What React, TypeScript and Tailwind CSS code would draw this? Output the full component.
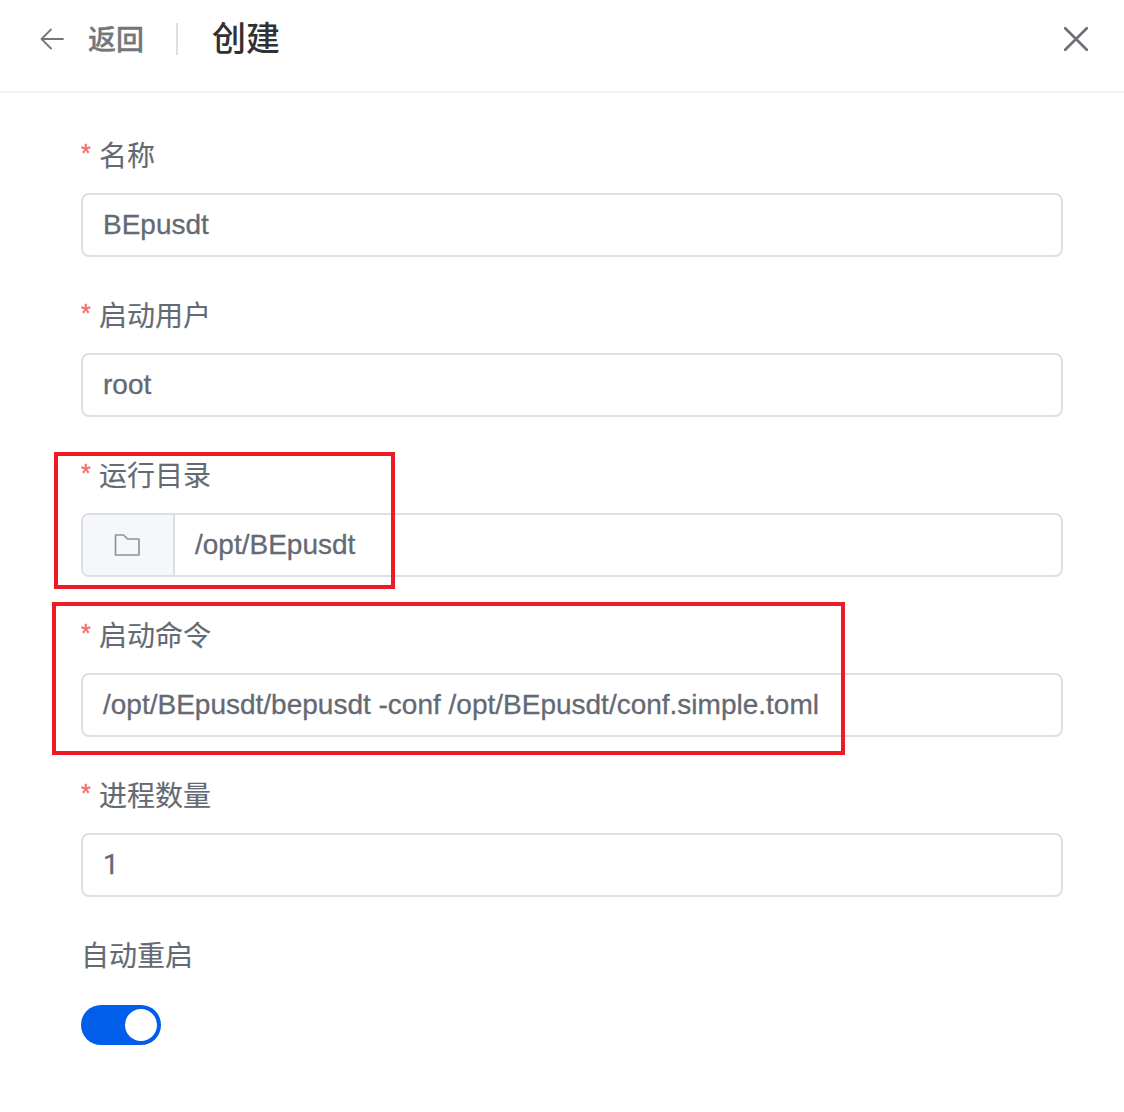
import type { ReactNode } from "react";

const box = "flex h-16 overflow-hidden rounded-[8px] border-2 border-[#dcdfe6] bg-white";

function Field({ label, required = true, children }: { label: string; required?: boolean; children: ReactNode }) {
  return (
    <div className="flex h-40 flex-col gap-4">
      <div className="flex h-[44px] pt-[2px] text-[28px] leading-[44px] [-webkit-text-stroke:0.15px]">
        {required && (
          <span className="-mt-1 mr-2 w-[10px] text-[25px] text-[#f56c6c] [-webkit-text-stroke:0.4px_#f56c6c]">*</span>
        )}
        <span>{label}</span>
      </div>
      {children}
    </div>
  );
}

function Input({ value, className = "" }: { value: string; className?: string }) {
  return (
    <div className={box}>
      <span className={`px-5 pt-px text-[28px] leading-[58px] whitespace-pre ${className}`}>{value}</span>
    </div>
  );
}

export default function App() {
  return (
    <div className="relative h-[1112px] w-[1124px] overflow-hidden bg-white font-['Liberation_Sans','Noto_Sans_CJK_SC',sans-serif] text-[#646a73] [-webkit-text-stroke:0.3px]">
      <header className="flex h-[93px] items-start border-b-2 border-[#f0f0f0] pl-10">
        <svg className="mt-[27px] h-6 w-6" viewBox="0 0 24 24" fill="none" stroke="#73767a" strokeWidth="1.8" strokeLinecap="round" strokeLinejoin="round">
          <path d="M23 12H2M11 2.5 1.5 12 11 21.5" />
        </svg>
        <span className="mt-[2px] ml-6 text-[28px] leading-[78px] font-medium text-[#73767a]">返回</span>
        <span className="mt-[23px] ml-8 h-8 w-[2px] bg-[#dcdfe6]" />
        <h1 className="ml-[34px] text-[34px] leading-[78px] font-medium text-[#303133] [-webkit-text-stroke:0px]">创建</h1>
        <svg className="mt-[26px] mr-[35px] ml-auto h-[26px] w-[26px]" viewBox="0 0 26 26" fill="none" stroke="#6d7075" strokeWidth="2.7" strokeLinecap="round">
          <path d="m2.2 2.2 21.6 21.6M23.8 2.2 2.2 23.8" />
        </svg>
      </header>
      <main className="mr-[61px] ml-[81px] pt-10">
        <Field label="名称"><Input value="BEpusdt" /></Field>
        <Field label="启动用户"><Input value="root" /></Field>
        <Field label="运行目录">
          <div className={box}>
            <div className="flex w-[92px] items-center justify-center border-r-2 border-[#dcdfe6] bg-[#f5f7fa] pr-[2px]">
              <svg className="h-[22px] w-[26px]" viewBox="0 0 26 22" fill="none" stroke="#909399" strokeWidth="1.7" strokeLinejoin="round">
                <path d="M1.5 1h8l4 4H25v16H1.5Z" />
              </svg>
            </div>
            <span className="px-5 pt-px text-[28px] leading-[58px]">/opt/BEpusdt</span>
          </div>
        </Field>
        <Field label="启动命令"><Input value="/opt/BEpusdt/bepusdt -conf /opt/BEpusdt/conf.simple.toml" /></Field>
        <Field label="进程数量"><Input value="1" className="font-['Roboto',sans-serif]" /></Field>
        <Field label="自动重启" required={false}>
          <div className="mt-3 flex h-10 w-20 items-center justify-end rounded-full bg-[#005eeb] pr-1">
            <span className="h-8 w-8 rounded-full bg-white" />
          </div>
        </Field>
      </main>
      <div className="absolute top-[452px] left-[54px] h-[137px] w-[341px] border-4 border-[#ed1c24]" />
      <div className="absolute top-[602px] left-[52px] h-[153px] w-[793px] border-4 border-[#ed1c24]" />
    </div>
  );
}
